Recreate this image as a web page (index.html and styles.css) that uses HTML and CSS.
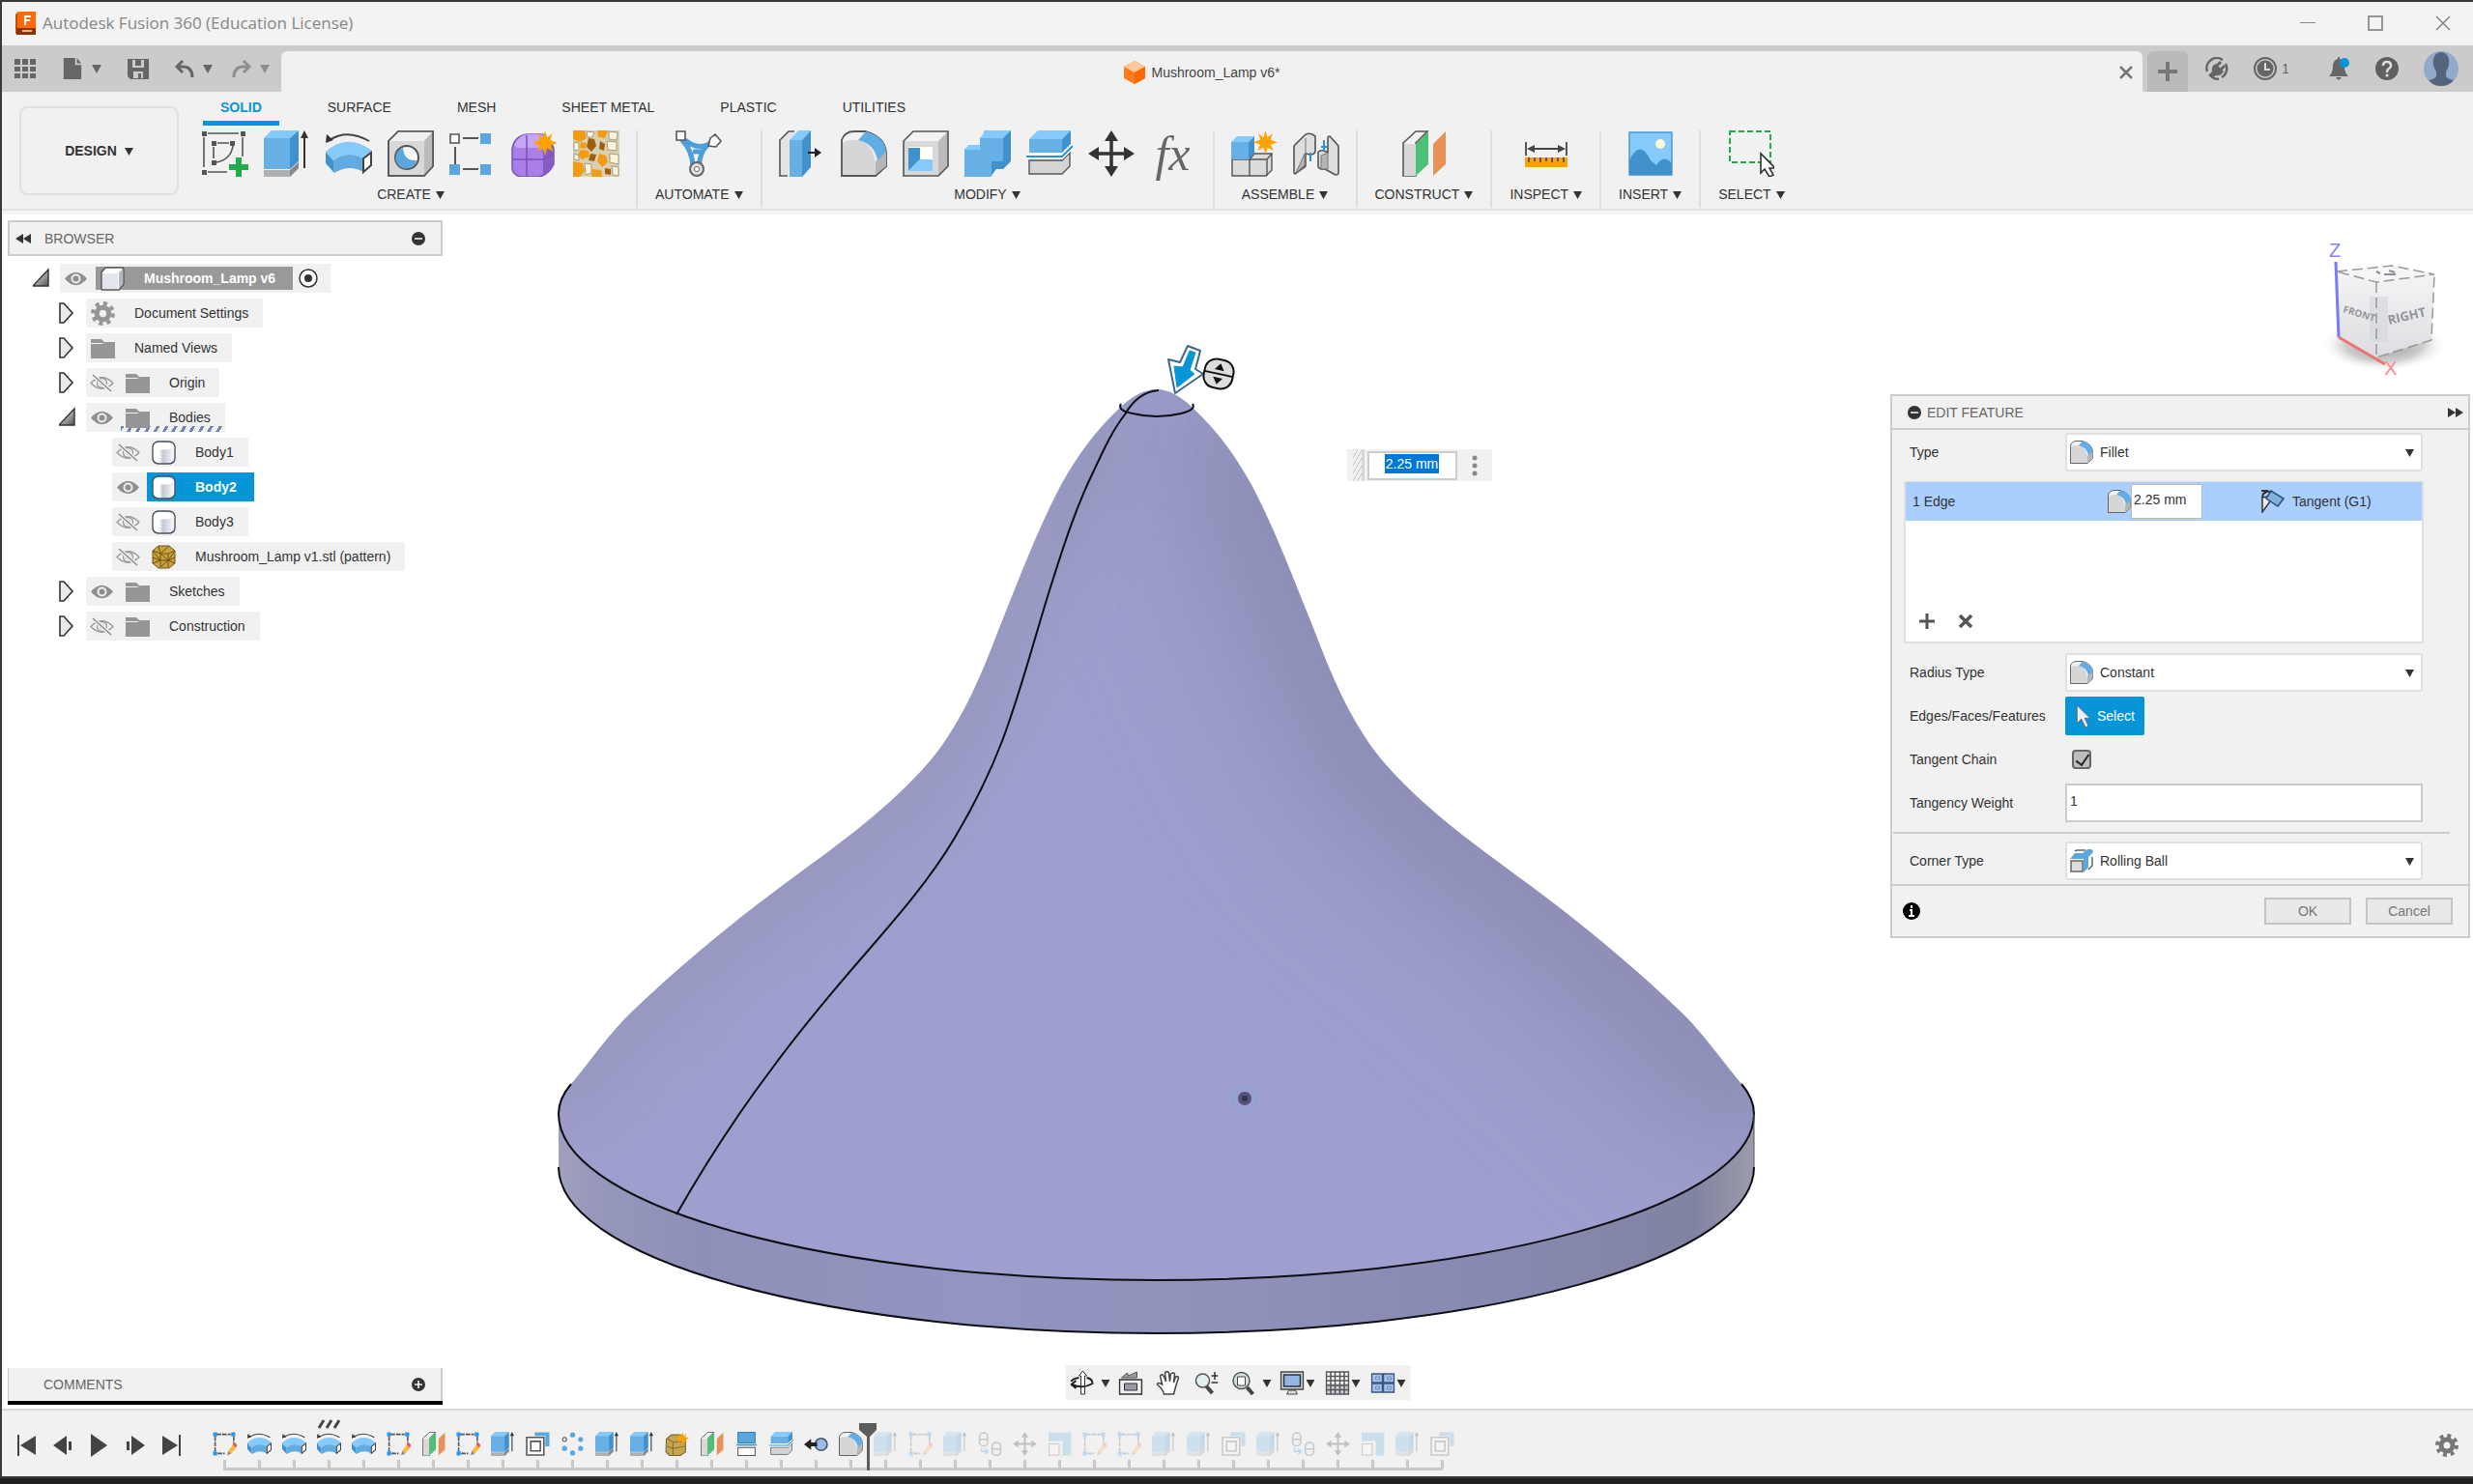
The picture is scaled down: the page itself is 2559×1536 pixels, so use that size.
FILE: index.html
```html
<!DOCTYPE html>
<html lang="en">
<head>
<meta charset="utf-8">
<title>Autodesk Fusion 360 (Education License)</title>
<link rel="stylesheet" href="styles.css">
</head>
<body>
<svg class="sprite" aria-hidden="true">
  <defs>
    <linearGradient id="toggleShade" x1="0" y1="0" x2="1" y2="1"><stop offset="0" stop-color="#fff"/><stop offset="1" stop-color="#555"/></linearGradient>
    <linearGradient id="bodyShade"><stop offset="0" stop-color="#fff"/><stop offset=".3" stop-color="#fff"/><stop offset=".45" stop-color="#c3c8d2"/><stop offset="1" stop-color="#fff"/></linearGradient>
  </defs>
  <symbol id="caret" viewBox="0 0 10 10"><path d="M0 1h10L5 10z" fill="currentColor"/></symbol>
  <symbol id="star" viewBox="0 0 24 24"><path d="M12 0l2 7 5-4-2 6 7 3-7 2 3 6-6-3-2 7-2-7-6 3 3-6-7-2 7-3-2-6 5 4z" fill="#ffa200"/></symbol>
  <symbol id="sketch" viewBox="0 0 48 48"><g fill="none" stroke="#555" stroke-width="1.6"><path d="M6 3h32M2 7v31M42 7v20M6 43h20M16 13h12M12 17v12M32 16Q30 30 15 33"/></g><path d="M0 1h5v5H0zM40 1h5v5h-5zM0 41h5v5H0zM10 11h5v5h-5zM29 11h5v5h-5zM10 31h5v5h-5z" fill="#555"/><path d="M35 28h6v7h7v6h-7v7h-6v-7h-7v-6h7z" fill="#21ab4b"/></symbol>
  <symbol id="extrude" viewBox="0 0 48 48"><path d="M0 41h27l9-8v6l-9 9H0z" fill="#b0b0b0"/><path d="M27 41l9-8v6l-9 9z" fill="#888"/><path d="M0 8h27v32H0z" fill="#67b0e6"/><path d="M0 8l8-8h28l-9 8z" fill="#86c9fb"/><path d="M27 8l9-8v32l-9 8z" fill="#4091cc"/><path d="M42 39V6" stroke="#333" stroke-width="2"/><path d="M38 8l4-8 4 8z" fill="#333"/></symbol>
  <symbol id="sweep" viewBox="0 0 48 48"><path d="M4 10Q22-2 45 11" fill="none" stroke="#444" stroke-width="2"/><path d="M0 13l1-9 7 6z" fill="#333"/><path d="M0 22v12l8 9V31z" fill="#4091cc"/><path d="M0 22Q22 2 48 21l-9 8Q22 20 8 31z" fill="#86c9fb"/><path d="M8 31Q22 20 39 29v14q-14-8-28 0l-3 1z" fill="#61abe2"/><path d="M39 29l8-6v13l-8 7z" fill="#fff" stroke="#444" stroke-width="2"/></symbol>
  <symbol id="hole" viewBox="0 0 48 48"><path d="M1 11l10-10h36v36L38 47H1z" fill="#d8d8d8" stroke="#555" stroke-width="1.6"/><path d="M1 11L11 1h36l-9 10z" fill="#f0f0f0"/><path d="M38 11l9-10v36l-9 10z" fill="#bbb"/><path d="M1 11l10-10h36v36L38 47H1z" fill="none" stroke="#555" stroke-width="1.6"/><circle cx="20" cy="28" r="12" fill="#f8f8f8" stroke="#555" stroke-width="2"/><path d="M16 18a11 11 0 1 0 14 13Q17 32 16 18z" fill="#5aa7e0"/></symbol>
  <symbol id="pattern" viewBox="0 0 48 48"><path d="M14 8h16M6 17v18M14 40h16" stroke="#555" stroke-width="2"/><path d="M1 4h9v9H1z" fill="#fff" stroke="#555" stroke-width="1.6"/><path d="M32 3h11v11H32zM0 35h11v11H0zM32 35h11v11H32z" fill="#5aa7e0"/></symbol>
  <symbol id="form" viewBox="0 0 48 48"><path d="M1 19Q3 6 16 4h16q9 5 12 15v16q-6 12-16 13H9q-8-3-8-9z" fill="#a97ee8" stroke="#7a51b4" stroke-width="1.5"/><path d="M3 15Q8 5 16 4h16l4 9-9 5H6z" fill="#c6a6f8"/><path d="M33 20l11-4v19q-4 9-11 12z" fill="#855cc4"/><path d="M16 5v42M1 30h32l11-6" fill="none" stroke="#7a51b4" stroke-width="1.5"/><use href="#star" x="22" y="0" width="26" height="26"/></symbol>
  <symbol id="lattice" viewBox="0 0 48 48"><path d="M0 0h48v48H0z" fill="#d9cfb2"/><g fill="#f39c12"><path d="M0 0h12l2 8-7 4-7-3zM25 0h11l-3 8-7-1zM0 32l10 2 2 8-5 6H0zM27 24l7 2 2 7-6 5-5-6zM8 20l8 1 1 6-8 3-4-5zM20 40l9 1 1 7H19zM8 12l6 1-1 6-6-1z"/></g><g fill="#9c5f10"><path d="M16 8l6 1 2 7-5 6-5-5zM18 24l6 1-2 7-6-1zM28 11l5 3-1 7-5-2zM33 39l6 1v6l-6-1z"/></g><g fill="#fff3da" stroke="#a59b80"><path d="M37 1l9 1-1 8-8-1zM35 11l10 1v9l-9-1zM38 24l9 1v10l-9-2zM1 12l5 1v7l-5 1zM12 34l7 1v9l-6 2zM40 37l7 1v9l-6-1zM14 1l8 1-2 5h-5zM1 24l5 2v5l-5-1z"/></g></symbol>
  <symbol id="automate" viewBox="0 0 48 48"><path d="M6 9q12 12 12 30M39 12q-14 5-15 28M10 10q14 12 28 2M18 22h10" fill="none" stroke="#4d9fda" stroke-width="5"/><path d="M1 1h9v9H1zM36 8l5-4 6 7-5 6-8-1z" fill="#fff" stroke="#555" stroke-width="1.6"/><circle cx="22" cy="40" r="7" fill="#ddd" stroke="#666" stroke-width="2"/><circle cx="22" cy="40" r="2.500" fill="#fff" stroke="#666"/></symbol>
  <symbol id="presspull" viewBox="0 0 48 48"><path d="M9 47H1V10L10 1h6" fill="#e4e4e4" stroke="#555" stroke-width="1.6"/><path d="M11 10h13v38H11z" fill="#67b0e6"/><path d="M11 10l9-10h13l-9 10z" fill="#86c9fb"/><path d="M24 10l9-10v38l-9 10z" fill="#4091cc"/><path d="M30 23h10" stroke="#222" stroke-width="2"/><path d="M37 18l7 5-7 5z" fill="#222"/></symbol>
  <symbol id="fillet" viewBox="0 0 48 48"><path d="M1 10Q4 1 14 1h12q20 6 21 22v14L36 47H1z" fill="#f1f1f1" stroke="#555" stroke-width="1.8"/><path d="M2 13q3-3 10-3h6q18 5 18 29v7H2z" fill="#d6d6d6"/><path d="M36 32l11-10v15L36 46z" fill="#b6b6b6"/><path d="M18 10L26 1q20 6 21 21l-9 9Q35 14 18 10z" fill="#62ade4"/></symbol>
  <symbol id="shell" viewBox="0 0 48 48"><path d="M1 11L11 1h36v36L37 47H1z" fill="#d8d8d8"/><path d="M1 11L11 1h36L37 11z" fill="#f3f3f3"/><path d="M37 11L47 1v36L37 47z" fill="#bbb"/><path d="M1 11L11 1h36v36L37 47H1z" fill="none" stroke="#555" stroke-width="1.6"/><path d="M6 17h25v25H6z" fill="#fff"/><path d="M6 18h12v12L6 42z" fill="#4091cc"/><path d="M6 42l12-12h13v12z" fill="#86c9fb"/></symbol>
  <symbol id="combine" viewBox="0 0 48 48"><path d="M0 20l5-5h11l5-15h27v32l-8 8h-7l-6 8H0z" fill="#4091cc"/><path d="M0 20h16V8h24v24H28v16H0z" fill="#67b0e6"/><path d="M0 20l5-5h11v5zM16 8l6-8h26l-8 8z" fill="#86c9fb"/></symbol>
  <symbol id="splitbody" viewBox="0 0 48 48"><path d="M3 31h34l8-8v14l-8 8H3z" fill="#d4d4d4" stroke="#555" stroke-width="1.4"/><path d="M3 9h34v14H3z" fill="#67b0e6"/><path d="M3 9l9-9h34l-9 9z" fill="#86c9fb"/><path d="M37 9l9-9v14l-9 9z" fill="#4091cc"/><path d="M0 27h37l11-11" fill="none" stroke="#fff" stroke-width="5"/><path d="M0 27h37l11-11" fill="none" stroke="#2590e8" stroke-width="2"/></symbol>
  <symbol id="move" viewBox="0 0 48 48"><path d="M24 6v36M6 24h36" stroke="#333" stroke-width="3.500"/><path d="M17 11l7-11 7 11zM17 37l7 11 7-11zM11 17L0 24l11 7zM37 17l11 7-11 7z" fill="#333"/></symbol>
  <symbol id="newcomp" viewBox="0 0 48 48"><path d="M1 30h18v17H1zM19 30l5-6h18v17l-6 6H19z" fill="#dcdcdc" stroke="#555" stroke-width="1.4"/><path d="M19 30h18v17M37 30l5-6" fill="none" stroke="#555" stroke-width="1.4"/><path d="M0 12h18v18H0z" fill="#67b0e6"/><path d="M0 12l6-6h18l-6 6z" fill="#86c9fb"/><path d="M18 12l6-6v18l-6 6z" fill="#4091cc"/><use href="#star" x="23" y="0" width="25" height="25"/></symbol>
  <symbol id="joint" viewBox="0 0 48 48"><g fill="#dedede" stroke="#555" stroke-width="1.6" stroke-linejoin="round"><path d="M1 16L12 5q3-3 8-1l3 2v16q-1 3-5 3l-5-1v13L2 45q-1 0-1-2z"/><path d="M47 16L38 6q-2 0-2 2v15l-4-2q-5-1-6 2v14q1 4 7 3l11 6q3 0 3-2z"/></g><path d="M13 8v17M3 44l9-8V24zM36 23v17l-7 0V26z" fill="#b5b5b5" stroke="#777"/><path d="M18 23v9M32 10v11M29 17h6" stroke="#2590e8" stroke-width="2"/></symbol>
  <symbol id="plane" viewBox="0 0 48 48"><path d="M3 13L16 1h12l-12 12v34H3z" fill="#f3f3f3" stroke="#555" stroke-width="1.6"/><path d="M4 14h12v33H4z" fill="#d8d8d8"/><path d="M16 14L29 1v34L16 47z" fill="#4dc077"/><path d="M34 14L47 1v34L34 47z" fill="#e8925a"/></symbol>
  <symbol id="measure" viewBox="0 0 48 48"><path d="M3 12v14M45 12v14M6 19h36" stroke="#444" stroke-width="1.8"/><path d="M4 19l8-4v8zM44 19l-8-4v8z" fill="#444"/><path d="M2 28h44v10H2z" fill="#ffa200"/><path d="M6 28v5M12 28v4M18 28v5M24 28v4M30 28v5M36 28v4M42 28v5" stroke="#333" stroke-width="1.4"/></symbol>
  <symbol id="picture" viewBox="0 0 48 48"><path d="M2 2h44v44H2z" fill="#86c9fb"/><circle cx="34" cy="14" r="5" fill="#fffbd0"/><path d="M2 31Q13 8 24 31l6 5q7-12 16-2v12H2z" fill="#4091cc"/><path d="M2 2h44v44H2z" fill="none" stroke="#4794cc" stroke-width="1.4"/></symbol>
  <symbol id="pick" viewBox="0 0 48 48"><path d="M2 1h42v32H2z" fill="none" stroke="#21ab4b" stroke-width="2" stroke-dasharray="6 3"/><path d="M34 24v20l4-4 5 8 4-2-4-7h6z" fill="#fff" stroke="#333" stroke-width="1.6"/></symbol>
  <symbol id="tlSketch" viewBox="0 0 48 48"><path d="M8 5h28M5 9v30M42 9v14M10 43h14" stroke="#555" stroke-width="3" stroke-dasharray="9 2"/><path d="M1 1h8v8H1zM37 1h8v8h-8zM1 39h8v8H1z" fill="#2196f3"/><path d="M31 38l9-12 7 5-10 12z" fill="#ffb640"/><path d="M40 26l3-4q5 0 5 6l-2 3z" fill="#f4475c"/><path d="M31 38l6 5-8 4z" fill="#888"/></symbol>
  <symbol id="tlShell" viewBox="0 0 48 48"><path d="M18 8V1h29v28h-8V8z" fill="#5ba6dc"/><path d="M2 11h34v35H2z" fill="#fff" stroke="#555" stroke-width="3"/><path d="M10 19h19v19H10z" fill="#fff" stroke="#555" stroke-width="3"/></symbol>
  <symbol id="tlCircular" viewBox="0 0 48 48"><g fill="#5aa7e0"><circle cx="24" cy="6" r="5"/><circle cx="40" cy="15" r="5"/><circle cx="40" cy="33" r="5"/><circle cx="24" cy="42" r="5"/><circle cx="8" cy="33" r="5"/></g><circle cx="8" cy="15" r="4" fill="#fff" stroke="#555" stroke-width="2"/></symbol>
  <symbol id="tlForm" viewBox="0 0 48 48"><path d="M3 14l10-8h18l10 8v26l-10 7H9l-7-7z" fill="#c6a552" stroke="#7a6326" stroke-width="2"/><path d="M5 14l11 6h18M5 29l11 4 24-4M16 20v26" fill="none" stroke="#8a6f2a" stroke-width="2"/><use href="#star" x="22" y="0" width="26" height="26"/></symbol>
  <symbol id="tlSplit" viewBox="0 0 48 48"><path d="M7 1h34v21H7z" fill="#5aa7e0" stroke="#3a7fb5" stroke-width="2"/><path d="M7 31h34v16H7z" fill="#fff" stroke="#555" stroke-width="2"/><path d="M4 26h40" stroke="#2196f3" stroke-width="3"/></symbol>
  <symbol id="tlJoint" viewBox="0 0 48 48"><circle cx="34" cy="25" r="12" fill="#9dbbe8" stroke="#456" stroke-width="3"/><path d="M0 25l14-11v7h12v8H14v7z" fill="#222"/></symbol>
  <symbol id="tlLink" viewBox="0 0 48 48"><g fill="#eee" stroke="#555" stroke-width="3"><rect x="3" y="2" width="16" height="26" rx="8"/><rect x="28" y="21" width="17" height="26" rx="8"/><path d="M3 15h16M28 34h17"/></g><path d="M7 31v8h10M14 34l6 5-6 5" fill="none" stroke="#2590e8" stroke-width="3"/></symbol>
  <symbol id="tlScale" viewBox="0 0 48 48"><path d="M2 1h45v46H30V18H2z" fill="#5aa7e0"/><path d="M3 24h20v22H3z" fill="#fff" stroke="#555" stroke-width="2"/></symbol>
  <symbol id="eye" viewBox="0 0 25 25"><path d="M1 12.500Q12.500-1 24 12.500 12.500 26 1 12.500z" fill="#8f8f8f"/><circle cx="12.500" cy="12.500" r="5" fill="#eee"/><circle cx="12.500" cy="12.500" r="3" fill="#8f8f8f"/></symbol>
  <symbol id="eyeOff" viewBox="0 0 25 25"><path d="M1 12.500Q12.500 1 24 12.500 12.500 24 1 12.500z" fill="none" stroke="#999" stroke-width="1.300"/><circle cx="12.500" cy="12.500" r="5" fill="none" stroke="#999" stroke-width="1.300"/><circle cx="12.500" cy="12.500" r="2" fill="none" stroke="#999"/><path d="M3 4l19 17" stroke="#f1f1f1" stroke-width="4"/><path d="M3 4l19 17" stroke="#888" stroke-width="1.300"/></symbol>
  <symbol id="folder" viewBox="0 0 25 25"><path d="M0 3h11l3 3v1H0zM0 8h12l3-2h10v17H0z" fill="#969696"/></symbol>
  <symbol id="gear" viewBox="0 0 24 24"><circle cx="12" cy="12" r="6" fill="none" stroke="currentColor" stroke-width="5"/><circle cx="12" cy="12" r="10" fill="none" stroke="currentColor" stroke-width="4" stroke-dasharray="3.927 3.927"/></symbol>
  <symbol id="body" viewBox="0 0 25 25"><path d="M1 6Q2 1 8 1h9q6 0 7 5v13q-1 5-7 5H8q-6 0-7-5z" fill="url(#bodyShade)"/><path d="M2 7Q12 12 23 7 22 2 12 2 3 2 2 7z" fill="#fff"/><path d="M1 6Q2 1 8 1h9q6 0 7 5v13q-1 5-7 5H8q-6 0-7-5z" fill="none" stroke="#4a5160" stroke-width="1.400"/></symbol>
  <symbol id="component" viewBox="0 0 25 25"><path d="M1 6l4-5h18l1 2v15l-5 6H2l-1-1z" fill="#fff" stroke="#555" stroke-width="1.400"/><path d="M2 7h16v16H2z" fill="#e3e6ec"/><path d="M19 6l4-4v16l-4 5z" fill="#b5b9c2"/></symbol>
  <symbol id="mesh" viewBox="0 0 25 25"><path d="M1 6l6-5h11l6 5v13l-6 5H7l-6-5z" fill="#c9a23c" stroke="#6c5214"/><path d="M1 6l8 3h8l7-3M9 9v14M17 9v14M1 13l8 3h8l7-3M7 1l2 8 9-8M1 6l8 10-8 3M9 9l8 7-8 7M24 6l-7 10 7 3" fill="none" stroke="#6c5214"/></symbol>
  <symbol id="closed" viewBox="0 0 18 22"><path d="M1 1h4l9 10-9 10H1z" fill="#e8eaee" stroke="#333" stroke-width="1.600"/></symbol>
  <symbol id="open" viewBox="0 0 18 22"><path d="M16 2v17H0z" fill="url(#toggleShade)" stroke="#333" stroke-width="1.400"/></symbol>
  <symbol id="minus" viewBox="0 0 14 14"><circle cx="7" cy="7" r="7" fill="#333"/><path d="M3 7h8" stroke="#f1f1f1" stroke-width="1.600"/></symbol>
  <symbol id="plus" viewBox="0 0 14 14"><circle cx="7" cy="7" r="7" fill="#333"/><path d="M3 7h8M7 3v8" stroke="#f1f1f1" stroke-width="1.600"/></symbol>
  <symbol id="rewind" viewBox="0 0 16 12"><path d="M8 1v10L0 6zM16 1v10L8 6z" fill="#333"/></symbol>
  <symbol id="forward" viewBox="0 0 16 12"><path d="M0 1v10l8-5zM8 1v10l8-5z" fill="#333"/></symbol>
  <symbol id="arrowptr" viewBox="0 0 16 28"><path d="M1 1v21l5-5 5 10 3-2-4-9h6z" fill="#eee" stroke="#666"/></symbol>
</svg>

<div class="app">
  <header class="titlebar">
    <svg class="i24" viewBox="0 0 24 24" aria-hidden="true"><path d="M2 2l2-2h18v24H2z" fill="#ff6b00"/><path d="M1 3l2-2v21l-2 1z" fill="#c24e00"/><path d="M2 17h20v7H2z" fill="#8a3500"/><path d="M10 4h7v2h-5v2h4v2h-4v4h-2z" fill="#fff"/><path d="M8 20h10" stroke="#e5b79a" stroke-width="2"/></svg>
    <span class="app-name">Autodesk Fusion 360 (Education License)</span>
    <div class="window-controls">
      <button aria-label="Minimize"><svg class="i16" viewBox="0 0 16 16"><path d="M0 7.500h16" stroke="#888"/></svg></button>
      <button aria-label="Maximize"><svg class="i16" viewBox="0 0 16 16"><rect x="1" y="1" width="14" height="14" fill="none" stroke="#777" stroke-width="1.500"/></svg></button>
      <button aria-label="Close"><svg class="i16" viewBox="0 0 16 16"><path d="M1 1l14 14M15 1L1 15" stroke="#777" stroke-width="1.300"/></svg></button>
    </div>
  </header>

  <div class="strip">
    <div class="quick">
      <button aria-label="Data panel"><svg class="i22" viewBox="0 0 22 22"><path d="M0 1h6v6H0zM8 1h6v6H8zM16 1h6v6h-6zM0 9h6v5H0zM8 9h6v5H8zM16 9h6v5h-6zM0 16h6v5H0zM8 16h6v5H8zM16 16h6v5h-6z" fill="#666"/></svg></button>
      <button class="drop" aria-label="File"><svg class="i22" viewBox="0 0 22 24"><path d="M1 0h13v8h7v16H1zM16 0l5 6h-5z" fill="#666"/></svg><svg class="c10"><use href="#caret"/></svg></button>
      <button aria-label="Save"><svg class="i22" viewBox="0 0 22 22"><path d="M0 1h22v21H3l-3-3z" fill="#666"/><path d="M5 2h12v8H5zM6 14h10v7H6z" fill="#cbcbcb"/><path d="M8 1h6v7H8zM11 16h3v6h-3z" fill="#666"/></svg></button>
      <div class="history">
        <button class="drop" aria-label="Undo"><svg class="i20" viewBox="0 0 20 20"><path d="M8 2L2 8l6 6M2 8h6q10 0 10 11" fill="none" stroke="#666" stroke-width="3"/></svg><svg class="c10"><use href="#caret"/></svg></button>
        <button class="drop faded" aria-label="Redo"><svg class="i20" viewBox="0 0 20 20"><path d="M12 2l6 6-6 6M18 8h-6Q2 8 2 19" fill="none" stroke="#666" stroke-width="3"/></svg><svg class="c10"><use href="#caret"/></svg></button>
      </div>
    </div>
    <div class="doc-tab">
      <svg class="i24" viewBox="0 0 24 24" aria-hidden="true"><path d="M1 6l11-6 11 6v12l-11 6-11-6z" fill="#ff7a1a"/><path d="M1 6l11-6 11 6-11 6z" fill="#ffc79e"/><path d="M12 12l11-6v12l-11 6z" fill="#ff6a00"/></svg>
      <span>Mushroom_Lamp v6*</span>
      <button class="doc-close" aria-label="Close document"><svg class="i14" viewBox="0 0 14 14"><path d="M1 1l12 12M13 1L1 13" stroke="#777" stroke-width="2.500"/></svg></button>
    </div>
    <button class="new-tab" aria-label="New design"><svg class="i20" viewBox="0 0 20 20"><path d="M10 0v20M0 10h20" stroke="#777" stroke-width="4"/></svg></button>
    <div class="account">
      <div class="account-part">
        <button aria-label="Extensions"><svg class="i24" viewBox="0 0 24 24"><path d="M2 15A10.500 10.500 0 0 1 18 3M21 7A10.500 10.500 0 0 1 17 21M14 22.500q-5 1-8-3" fill="none" stroke="#666" stroke-width="2.500"/><path d="M3 19l4-4q-1-6 4-8l8 8q-3 5-8 4l-4 3z" fill="#666"/><path d="M12 9l4-4M16 13l4-4" stroke="#666" stroke-width="3"/></svg></button>
        <button class="jobs" aria-label="Job status"><svg class="i24" viewBox="0 0 24 24"><circle cx="12" cy="12" r="11" fill="none" stroke="#666" stroke-width="2"/><circle cx="12" cy="12" r="8.500" fill="#666"/><path d="M12 6v7h5" fill="none" stroke="#ddd" stroke-width="2"/></svg><span>1</span></button>
      </div>
      <div class="account-part">
        <button aria-label="Notifications"><svg class="i24" viewBox="0 0 24 24"><path d="M2 20q4-4 4-10 0-7 5-8V0h2v2q5 1 5 8 0 6 4 10zM9 21h6q-3 5-6 0z" fill="#666"/><circle cx="18" cy="6" r="5" fill="#0696d7"/></svg></button>
        <button aria-label="Help"><svg class="i24" viewBox="0 0 24 24"><circle cx="12" cy="12" r="12" fill="#606060"/><path d="M8 9q0-4 4-4t4 4q0 2-2 3t-2 4" fill="none" stroke="#ddd" stroke-width="2.500"/><circle cx="12" cy="19" r="1.600" fill="#ddd"/></svg></button>
        <button aria-label="Profile"><svg class="i36" viewBox="0 0 36 36"><circle cx="18" cy="18" r="18" fill="#92a9c9"/><path d="M10 8q2-7 8-7t8 7q1 8-3 13v5q2 3 8 4-5 6-13 6T5 30q6-1 8-4v-5Q9 16 10 8z" fill="#53657c"/></svg></button>
      </div>
    </div>
  </div>

  <div class="ribbon">
    <button class="workspace">DESIGN <svg class="c9"><use href="#caret"/></svg></button>
    <div class="ribbon-main">
      <nav class="tabs">
        <button class="active">SOLID</button><button>SURFACE</button><button>MESH</button><button>SHEET METAL</button><button>PLASTIC</button><button>UTILITIES</button>
      </nav>
      <div class="groups">
        <section class="group"><div class="tools">
          <button aria-label="Create sketch"><svg class="i48"><use href="#sketch"/></svg></button><button aria-label="Extrude"><svg class="i48"><use href="#extrude"/></svg></button><button aria-label="Revolve"><svg class="i48"><use href="#sweep"/></svg></button><button aria-label="Hole"><svg class="i48"><use href="#hole"/></svg></button><button aria-label="Pattern"><svg class="i48"><use href="#pattern"/></svg></button><button aria-label="Create form"><svg class="i48"><use href="#form"/></svg></button><button aria-label="Volumetric lattice"><svg class="i48"><use href="#lattice"/></svg></button></div>
          <button class="menu">CREATE <svg class="c9"><use href="#caret"/></svg></button></section>
        <section class="group small"><div class="tools"><button aria-label="Automate"><svg class="i48"><use href="#automate"/></svg></button></div><button class="menu">AUTOMATE <svg class="c9"><use href="#caret"/></svg></button></section>
        <section class="group"><div class="tools">
          <button aria-label="Press pull"><svg class="i48"><use href="#presspull"/></svg></button><button aria-label="Fillet"><svg class="i48"><use href="#fillet"/></svg></button><button aria-label="Shell"><svg class="i48"><use href="#shell"/></svg></button><button aria-label="Combine"><svg class="i48"><use href="#combine"/></svg></button><button aria-label="Split body"><svg class="i48"><use href="#splitbody"/></svg></button><button aria-label="Move"><svg class="i48"><use href="#move"/></svg></button><button class="fx">fx</button></div>
          <button class="menu">MODIFY <svg class="c9"><use href="#caret"/></svg></button></section>
        <section class="group"><div class="tools"><button aria-label="New component"><svg class="i48"><use href="#newcomp"/></svg></button><button aria-label="Joint"><svg class="i48"><use href="#joint"/></svg></button></div><button class="menu">ASSEMBLE <svg class="c9"><use href="#caret"/></svg></button></section>
        <section class="group small"><div class="tools"><button aria-label="Offset plane"><svg class="i48"><use href="#plane"/></svg></button></div><button class="menu">CONSTRUCT <svg class="c9"><use href="#caret"/></svg></button></section>
        <section class="group small"><div class="tools"><button aria-label="Measure"><svg class="i48"><use href="#measure"/></svg></button></div><button class="menu">INSPECT <svg class="c9"><use href="#caret"/></svg></button></section>
        <section class="group small"><div class="tools"><button aria-label="Insert canvas"><svg class="i48"><use href="#picture"/></svg></button></div><button class="menu">INSERT <svg class="c9"><use href="#caret"/></svg></button></section>
        <section class="group small"><div class="tools"><button aria-label="Window selection"><svg class="i48"><use href="#pick"/></svg></button></div><button class="menu">SELECT <svg class="c9"><use href="#caret"/></svg></button></section>
      </div>
    </div>
  </div>

  <main class="viewport">
    <svg class="scene" viewBox="2 222 2557 1236" role="img" aria-label="Lamp body model">
      <defs>
        <path id="dome" d="M1197 403C1183 403 1170 411 1159 422C1135 444 1115 471 1099 500C1075 545 1057 593 1038 640C1030 660 1022 682 1013 702C1000 732 983 763 962 788C918 839 863 877 809 917C755 957 702 1001 654 1047C630 1070 612 1097 591 1122Q578 1137 578 1153A618.500 172 0 0 0 1815 1153Q1815 1137 1802 1122C1781 1097 1763 1070 1739 1047C1691 1001 1638 957 1584 917C1530 877 1475 839 1431 788C1410 763 1393 732 1380 702C1371 682 1363 660 1355 640C1336 593 1318 545 1294 500C1278 471 1258 444 1234 422C1223 411 1210 403 1197 403Z"/>
        <clipPath id="domeClip"><use href="#dome"/></clipPath>
        <filter id="soft" x="-20%" y="-20%" width="140%" height="140%"><feGaussianBlur stdDeviation="34"/></filter>
        <filter id="softer" x="-30%" y="-20%" width="160%" height="140%"><feGaussianBlur stdDeviation="70"/></filter>
        <linearGradient id="rim"><stop offset="0" stop-color="#a0a1bc"/><stop offset=".03" stop-color="#9697bb"/><stop offset=".12" stop-color="#8e90b8"/><stop offset=".35" stop-color="#9295c0"/><stop offset=".55" stop-color="#9092bb"/><stop offset=".8" stop-color="#8788b0"/><stop offset=".95" stop-color="#8183a2"/><stop offset="1" stop-color="#9a9bab"/></linearGradient>
      </defs>
      <path d="M578 1153V1208A618.500 172 0 0 0 1815 1208V1153A618.500 172 0 0 1 578 1153Z" fill="url(#rim)"/>
      <use href="#dome" fill="#9e9fce"/>
      <g clip-path="url(#domeClip)" fill="none">
        <path d="M1265 440C1340 560 1370 700 1430 790C1560 900 1720 1020 1850 1160" stroke="#8486a8" stroke-width="190" opacity=".5" filter="url(#softer)"/>
        <path d="M1234 422C1278 471 1336 593 1355 640C1371 682 1400 751 1431 788C1475 839 1530 877 1584 917C1638 957 1720 1028 1830 1153" stroke="#7e80a0" stroke-width="50" opacity=".32" filter="url(#soft)"/>
        <path d="M1159 422C1115 471 1057 593 1038 640C1022 682 983 763 962 788C918 839 863 877 809 917C755 957 630 1060 560 1153" stroke="#8b8da8" stroke-width="60" opacity=".5" filter="url(#soft)"/>
      </g>
      <g fill="none" stroke="#0d0d14" stroke-width="2">
        <path d="M591 1122Q578 1137 578 1153A618.500 172 0 0 0 1815 1153Q1815 1137 1802 1122M578 1208A618.500 172 0 0 0 1815 1208"/>
        <path d="M1815 1153V1208" stroke="#555" stroke-width="1"/>
        <path d="M1199 404C1184 405 1172 415 1164 429C1150 447 1141 468 1131 489C1112 528 1099 570 1086 611C1070 662 1056 717 1037 767C1024 801 1007 835 988 867C963 909 931 946 899 983C865 1022 832 1061 801 1103C764 1152 730 1204 700 1257"/>
        <path d="M1160 418Q1156 425 1172 428Q1197 434 1222 428Q1238 424 1234 418"/>
      </g>
      <circle cx="1288" cy="1137" r="12" fill="none" stroke="#83a6d6" stroke-width="1.500"/>
      <circle cx="1288" cy="1137" r="7" fill="#52527a"/><circle cx="1288" cy="1137" r="3" fill="#343450"/>
      <path d="M1229 358l13 5-5 19 8 5-29 20-7-35 12 3z" fill="#fff" stroke="#41688c" stroke-width="2" stroke-linejoin="round"/>
      <path d="M1231 363l6 2-6 18 5 4-18 14-3-22 9 1z" fill="#0696d7" stroke="#0696d7"/>
      <g transform="translate(1261 387) rotate(12)"><rect x="-15" y="-15" width="30" height="30" rx="12" fill="#ddd" stroke="#111" stroke-width="2"/><path d="M-15 0h30" stroke="#111" stroke-width="2"/><path d="M-5-4h10l-5-7zM-5 4h10l-5 7z" fill="#111"/></g>
    </svg>

    <div class="left-dock">
      <aside class="browser">
        <div class="panel-head"><svg class="i16"><use href="#rewind"/></svg><h2>BROWSER</h2><button aria-label="Collapse browser"><svg class="i14"><use href="#minus"/></svg></button></div>
        <ul class="tree">
          <li class="l0"><button class="toggle" aria-label="Collapse"><svg><use href="#open"/></svg></button><div class="label"><svg class="i25 vis"><use href="#eye"/></svg><span class="node current"><svg class="i25"><use href="#component"/></svg>Mushroom_Lamp v6</span><svg class="i25 radio" viewBox="0 0 25 25"><circle cx="12" cy="12" r="9" fill="#fff" stroke="#333" stroke-width="1.500"/><circle cx="12" cy="12" r="4" fill="#333"/></svg></div></li>
          <li class="l1"><button class="toggle" aria-label="Expand"><svg><use href="#closed"/></svg></button><div class="label"><span class="node"><svg class="i25 grey"><use href="#gear"/></svg>Document Settings</span></div></li>
          <li class="l1"><button class="toggle" aria-label="Expand"><svg><use href="#closed"/></svg></button><div class="label"><span class="node"><svg class="i25"><use href="#folder"/></svg>Named Views</span></div></li>
          <li class="l1"><button class="toggle" aria-label="Expand"><svg><use href="#closed"/></svg></button><div class="label"><svg class="i25 vis"><use href="#eyeOff"/></svg><span class="node"><svg class="i25"><use href="#folder"/></svg>Origin</span></div></li>
          <li class="l1"><button class="toggle" aria-label="Collapse"><svg><use href="#open"/></svg></button><div class="label"><svg class="i25 vis"><use href="#eye"/></svg><span class="node parent"><svg class="i25"><use href="#folder"/></svg>Bodies</span></div></li>
          <li class="l2"><div class="label"><svg class="i25 vis"><use href="#eyeOff"/></svg><span class="node"><svg class="i25"><use href="#body"/></svg>Body1</span></div></li>
          <li class="l2"><div class="label"><svg class="i25 vis"><use href="#eye"/></svg><span class="node selected"><svg class="i25"><use href="#body"/></svg>Body2</span></div></li>
          <li class="l2"><div class="label"><svg class="i25 vis"><use href="#eyeOff"/></svg><span class="node"><svg class="i25"><use href="#body"/></svg>Body3</span></div></li>
          <li class="l2"><div class="label"><svg class="i25 vis"><use href="#eyeOff"/></svg><span class="node"><svg class="i25"><use href="#mesh"/></svg>Mushroom_Lamp v1.stl (pattern)</span></div></li>
          <li class="l1"><button class="toggle" aria-label="Expand"><svg><use href="#closed"/></svg></button><div class="label"><svg class="i25 vis"><use href="#eye"/></svg><span class="node"><svg class="i25"><use href="#folder"/></svg>Sketches</span></div></li>
          <li class="l1"><button class="toggle" aria-label="Expand"><svg><use href="#closed"/></svg></button><div class="label"><svg class="i25 vis"><use href="#eyeOff"/></svg><span class="node"><svg class="i25"><use href="#folder"/></svg>Construction</span></div></li>
        </ul>
      </aside>
      <div class="comments"><h2>COMMENTS</h2><button aria-label="Expand comments"><svg class="i14"><use href="#plus"/></svg></button></div>
    </div>

    <div class="right-dock">
      <svg class="cube" viewBox="2390 234 160 164" role="img" aria-label="View cube">
        <defs><radialGradient id="cubeShadow"><stop offset="0" stop-color="#777" stop-opacity=".8"/><stop offset=".6" stop-color="#999" stop-opacity=".5"/><stop offset="1" stop-color="#fff" stop-opacity="0"/></radialGradient><linearGradient id="cubeFace" x1="0" y1="0" x2="0" y2="1"><stop offset="0" stop-color="#f4f4f5"/><stop offset="1" stop-color="#dcdde0"/></linearGradient></defs>
        <ellipse cx="2467" cy="357" rx="66" ry="28" fill="url(#cubeShadow)"/>
        <path d="M2418 281l57-6 44 9-60 8z" fill="#f6f6f7"/><path d="M2418 281l41 11v78l-39-21z" fill="url(#cubeFace)"/><path d="M2459 292l60-8-3 68-57 18z" fill="url(#cubeFace)"/>
        <path d="M2452 307h19v48l-19-2z" fill="#d5d9df" opacity=".7"/>
        <path d="M2418 281l57-6 44 9-60 8zM2459 292v78l57-18 3-68" fill="none" stroke="#999" stroke-width="1.500" stroke-dasharray="11 5"/>
        <path d="M2459 281l4 2M2467 284h12M2472 280l6 2" stroke="#8a8d93" stroke-width="2"/>
        <path d="M2417 271l3 78" stroke="#7b7bf5" stroke-width="3"/><path d="M2420 349l48 28" stroke="#ee7373" stroke-width="3"/>
        <text x="2416" y="266" class="axis z">Z</text><text x="2474" y="388" class="axis x">X</text>
        <text class="face front" transform="translate(2424 323) rotate(17)">FRONT</text><text class="face" transform="translate(2472 336) rotate(-13)">RIGHT</text>
      </svg>
      <form class="feature">
        <div class="feature-head"><svg class="i14"><use href="#minus"/></svg><h2>EDIT FEATURE</h2><svg class="i16"><use href="#forward"/></svg></div>
        <div class="feature-body">
          <div class="row"><label for="type">Type</label><div class="combo"><svg class="i24"><use href="#fillet"/></svg><select id="type"><option>Fillet</option></select><svg class="c9"><use href="#caret"/></svg></div></div>
          <div class="edges">
            <div class="edge"><span class="edge-name">1 Edge</span><svg class="i24"><use href="#fillet"/></svg><input aria-label="Radius" value="2.25 mm"><svg class="i24 tangent" viewBox="0 0 24 24"><path d="M1 8v15l8-11-3-5z" fill="#eee" stroke="#333" stroke-width="1.500"/><path d="M0 1h6l4 2M1 8q0-5 5-6" fill="none" stroke="#333" stroke-width="2"/><path d="M10 1l13 8-6 8L5 9z" fill="#82b0dc" stroke="#29527c" stroke-width="1.500"/></svg><span>Tangent (G1)</span></div>
            <div class="edge-tools"><button type="button" aria-label="Add selection set"><svg class="i16" viewBox="0 0 16 16"><path d="M8 0v16M0 8h16" stroke="#555" stroke-width="3"/></svg></button><button type="button" aria-label="Remove selection set"><svg class="i14" viewBox="0 0 14 14"><path d="M1 1l12 12M13 1L1 13" stroke="#555" stroke-width="3.500"/></svg></button></div>
          </div>
          <div class="row"><label for="radius-type">Radius Type</label><div class="combo"><svg class="i24"><use href="#fillet"/></svg><select id="radius-type"><option>Constant</option></select><svg class="c9"><use href="#caret"/></svg></div></div>
          <div class="row"><label for="pick-edges">Edges/Faces/Features</label><button type="button" class="select-btn" id="pick-edges"><svg><use href="#arrowptr"/></svg>Select</button></div>
          <div class="row"><label for="chain">Tangent Chain</label><input type="checkbox" id="chain" checked></div>
          <div class="row"><label for="weight">Tangency Weight</label><input class="text" id="weight" value="1"></div>
          <hr>
          <div class="row"><label for="corner">Corner Type</label><div class="combo"><svg class="i24" viewBox="0 0 24 24"><path d="M1 12h12v11H1z" fill="#ddd" stroke="#666" stroke-width="1.500"/><path d="M5 2l2-1h9M23 8v9l-4 4" fill="none" stroke="#666" stroke-width="1.500"/><path d="M0 10l5-6h8l5-4q6-1 6 3l-5 5v11l-5 5V10z" fill="#5aa7e0"/></svg><select id="corner"><option>Rolling Ball</option></select><svg class="c9"><use href="#caret"/></svg></div></div>
        </div>
        <div class="feature-foot"><svg class="i18" viewBox="0 0 18 18" aria-hidden="true"><circle cx="9" cy="9" r="9"/><path d="M9 3v3M7 8h2v6M6 14h6" stroke="#fff" stroke-width="2" fill="none"/></svg><button type="button">OK</button><button type="button">Cancel</button></div>
      </form>
    </div>

    <div class="value-box"><i class="grip"></i><input aria-label="Fillet radius" value="2.25 mm"><button aria-label="More"><svg viewBox="0 0 6 22"><g fill="#888"><circle cx="3" cy="3" r="2.500"/><circle cx="3" cy="11" r="2.500"/><circle cx="3" cy="19" r="2.500"/></g></svg></button></div>

    <div class="navbar">
      <button class="drop" aria-label="Orbit"><svg class="i25" viewBox="0 0 25 25"><path d="M11 24V5H9l4-5 4 5h-2v19z" fill="#fff" stroke="#333"/><path d="M6 18l-5-4 5-4M2 14q11 5 21-1 0-5-6-6M9 7Q2 8 1 11" fill="none" stroke="#222" stroke-width="2"/></svg><svg class="c9"><use href="#caret"/></svg></button>
      <button aria-label="Look at"><svg class="i25" viewBox="0 0 25 25"><path d="M1 9h23v15H1z" fill="#eee" stroke="#333" stroke-width="1.500"/><path d="M6 13h13v7H6z" fill="#99a" stroke="#333"/><path d="M3 7l6-5 1 3 9-4v6z" fill="#99a" stroke="#555"/></svg></button>
      <button aria-label="Pan"><svg class="i25" viewBox="0 0 25 25"><path d="M8 24q-1-5-7-10 0-3 5 0L4 5q2-3 4 1l2 5-1-9q2-3 4 0l1 9 1-8q3-2 4 0l-1 9 2-6q3-1 3 1-3 9-5 17z" fill="#fff" stroke="#444" stroke-width="1.500"/></svg></button>
      <button aria-label="Zoom"><svg class="i25" viewBox="0 0 25 25"><circle cx="9" cy="10" r="7" fill="#e2eeee" stroke="#555" stroke-width="1.500"/><path d="M13 16l6 7" stroke="#444" stroke-width="4"/><path d="M18 5h7M21.500 1v8M18 12h7" stroke="#333" stroke-width="1.500"/></svg></button>
      <button class="drop" aria-label="Fit"><svg class="i25" viewBox="0 0 25 25"><circle cx="10" cy="10" r="8.500" fill="#cfe0dd" stroke="#555" stroke-width="1.500"/><path d="M6 6h8v9H6z" fill="#fff" stroke="#444"/><path d="M16 17l6 7" stroke="#444" stroke-width="4"/></svg><svg class="c9"><use href="#caret"/></svg></button>
      <button class="drop tight" aria-label="Display settings"><svg class="i25" viewBox="0 0 25 25"><path d="M1 1h23v18H1z" fill="#ddd" stroke="#444" stroke-width="1.500"/><path d="M4 4h17v12H4z" fill="#93b5e4" stroke="#234" stroke-width="1.500"/><path d="M9 20h7l2 4H7z" fill="#ddd" stroke="#444"/></svg><svg class="c9"><use href="#caret"/></svg></button>
      <button class="drop tight" aria-label="Grid and snaps"><svg class="i25" viewBox="0 0 25 25"><path d="M1 1h23v23H1z" fill="#fff"/><path d="M1 13h23v11H1z" fill="#ccd"/><path d="M1 1h23v23H1zM5.500 1v23M10 1v23M15 1v23M19.500 1v23M1 5.500h23M1 10h23M1 15h23M1 19.500h23" fill="none" stroke="#555" stroke-width="1.500"/></svg><svg class="c9"><use href="#caret"/></svg></button>
      <button class="drop tight" aria-label="Viewports"><svg class="i25" viewBox="0 0 25 25"><path d="M1 3h11v9H1zM13 3h11v9H13zM1 13h11v9H1zM13 13h11v9H13z" fill="#a9c4ea" stroke="#3c5580" stroke-width="1.500"/><path d="M5 6h4v3H5zM17 6h4v3h-4zM5 16h4v3H5zM17 16h4v3h-4z" fill="none" stroke="#6d8cbd"/></svg><svg class="c9"><use href="#caret"/></svg></button>
    </div>
  </main>

  <footer class="timeline">
    <div class="playback">
      <button aria-label="To beginning"><svg class="i24" viewBox="0 0 24 24"><path d="M3 1h2v22H3zM22 2v20L6 12z" fill="#444"/></svg></button>
      <button aria-label="Step back"><svg class="i24" viewBox="0 0 24 24"><path d="M16 2v20L2 12zM18 8h3v9h-3z" fill="#444"/></svg></button>
      <button aria-label="Play"><svg class="i24" viewBox="0 0 24 24"><path d="M3 0v24l17-12z" fill="#444"/></svg></button>
      <button aria-label="Step forward"><svg class="i24" viewBox="0 0 24 24"><path d="M7 2v20l14-10zM2 8h3v9H2z" fill="#444"/></svg></button>
      <button aria-label="To end"><svg class="i24" viewBox="0 0 24 24"><path d="M18 1h2v22h-2zM1 2v20l16-10z" fill="#444"/></svg></button>
    </div>
    <ol class="features">
      <li><svg><use href="#tlSketch"/></svg></li><li><svg><use href="#sweep"/></svg></li><li><svg><use href="#sweep"/></svg></li>
      <li><svg class="slashes" viewBox="0 0 24 10"><path d="M2 9l5-8M10 9l5-8M18 9l5-8" stroke="#444" stroke-width="3"/></svg><svg><use href="#sweep"/></svg></li>
      <li><svg><use href="#sweep"/></svg></li><li><svg><use href="#tlSketch"/></svg></li><li><svg><use href="#plane"/></svg></li><li><svg><use href="#tlSketch"/></svg></li><li><svg><use href="#extrude"/></svg></li><li><svg><use href="#tlShell"/></svg></li><li><svg><use href="#tlCircular"/></svg></li><li><svg><use href="#extrude"/></svg></li><li><svg><use href="#extrude"/></svg></li><li><svg><use href="#tlForm"/></svg></li><li><svg><use href="#plane"/></svg></li><li><svg><use href="#tlSplit"/></svg></li><li><svg><use href="#splitbody"/></svg></li><li><svg><use href="#tlJoint"/></svg></li>
      <li><svg><use href="#fillet"/></svg><svg class="marker" viewBox="0 0 18 49"><path d="M0 0h18v7l-7 7v35H8V14L0 7z" fill="#5c5c5c"/></svg></li>
      <li class="off"><svg><use href="#extrude"/></svg></li><li class="off"><svg><use href="#tlSketch"/></svg></li><li class="off"><svg><use href="#extrude"/></svg></li><li class="off"><svg><use href="#tlLink"/></svg></li><li class="off"><svg><use href="#move"/></svg></li><li class="off"><svg><use href="#tlScale"/></svg></li><li class="off"><svg><use href="#tlSketch"/></svg></li><li class="off"><svg><use href="#tlSketch"/></svg></li><li class="off"><svg><use href="#extrude"/></svg></li><li class="off"><svg><use href="#extrude"/></svg></li><li class="off"><svg><use href="#tlShell"/></svg></li><li class="off"><svg><use href="#extrude"/></svg></li><li class="off"><svg><use href="#tlLink"/></svg></li><li class="off"><svg><use href="#move"/></svg></li><li class="off"><svg><use href="#tlScale"/></svg></li><li class="off"><svg><use href="#extrude"/></svg></li><li class="off"><svg><use href="#tlShell"/></svg></li>
    </ol>
    <button class="settings" aria-label="Timeline settings"><svg class="i24"><use href="#gear"/></svg></button>
  </footer>
</div>
</body>
</html>
```
FILE: styles.css
```css
* { box-sizing: border-box; }
body {
  margin: 0;
  background: #222;
  color: #333;
  font: 14px/20px "Liberation Sans", Arial, sans-serif;
}
button {
  display: flex;
  align-items: center;
  justify-content: center;
  margin: 0;
  padding: 0;
  border: 0;
  background: none;
  color: inherit;
  font: inherit;
}
input, select { margin: 0; color: inherit; font: inherit; }
svg { display: block; flex: none; }
h2 { margin: 0; font-size: 14px; font-weight: 400; color: #666; }
ul, ol { margin: 0; padding: 0; list-style: none; }

.sprite { position: absolute; width: 0; height: 0; }
.c9 { width: 9px; height: 9px; }
.c10 { width: 10px; height: 10px; }
.i14 { width: 14px; height: 14px; }
.i16 { width: 16px; height: 16px; }
.i18 { width: 18px; height: 18px; }
.i20 { width: 20px; height: 20px; }
.i22 { width: 22px; height: 22px; }
.i24 { width: 24px; height: 24px; }
.i25 { width: 25px; height: 25px; }
.i36 { width: 36px; height: 36px; }
.i48 { width: 48px; height: 48px; }

.app {
  display: flex;
  flex-direction: column;
  min-height: calc(100vh - 6px);
  border: solid #3a3838;
  border-width: 2px 0 2px 2px;
}

/* title bar */
.titlebar {
  display: flex;
  align-items: center;
  gap: 5px;
  height: 45px;
  padding: 0 23px 2px 13px;
  background: #f3f3f3;
}
.app-name { font: 17px/24px "Open Sans", sans-serif; color: #868686; }
.window-controls { display: flex; gap: 54px; margin-left: auto; }

/* document strip */
.strip { display: flex; height: 48px; background: #cbcbcb; color: #666; }
.quick { display: flex; align-items: center; gap: 27px; width: 289px; padding-left: 13px; }
.history { display: flex; gap: 20px; }
.drop { gap: 9px; }
.faded { opacity: .6; }
.doc-tab {
  display: flex;
  flex: 1;
  align-items: center;
  justify-content: center;
  gap: 5px;
  margin-top: 6px;
  padding: 2px 10px 0 8px;
  border-radius: 6px 6px 0 0;
  background: #f1f1f1;
  color: #444;
}
.doc-tab > svg { margin-left: auto; }
.doc-close { margin-left: auto; }
.new-tab { width: 42px; margin: 6px 0 0 5px; border-radius: 6px 6px 0 0; background: #bababa; }
.account { display: flex; justify-content: space-between; width: 295px; padding: 0 15px 0 18px; }
.account-part { display: flex; align-items: center; gap: 26px; }
.jobs { gap: 5px; }

/* ribbon */
.ribbon {
  display: flex;
  height: 127px;
  padding: 0 0 6px 18px;
  background: linear-gradient(#f1f1f1 121px, #e2e2e2 121px, #e2e2e2 123px, #f5f5f5 123px);
}
.workspace {
  gap: 8px;
  width: 165px;
  height: 92px;
  margin-top: 15px;
  border: 2px solid #e0e0e0;
  border-radius: 8px;
  font-weight: 700;
}
.tabs { display: flex; gap: 32px; height: 35px; margin-left: 25px; }
.tabs button { padding: 2px 18px 0; border-bottom: 5px solid transparent; }
.tabs .active { border-color: #0696d7; color: #0696d7; font-weight: 700; }
.groups { display: flex; margin: 5px 0 0 7px; }
.group { display: flex; flex-direction: column; align-items: center; padding: 0 17px; border-right: 2px solid #dedede; }
.group:last-child { border: 0; }
.group.small { padding: 0 18px; }
.tools { display: flex; gap: 16px; }
.tools button { width: 48px; height: 48px; }
.tools .fx { color: #666; font: italic 50px/48px "Liberation Serif", serif; }
.menu { gap: 5px; height: 28px; margin-top: 4px; }

/* viewport */
.viewport { position: relative; display: flex; flex: 1; justify-content: space-between; background: #fff; }
.scene { position: absolute; inset: 0; width: 100%; height: 100%; }
.left-dock { position: relative; display: flex; flex-direction: column; justify-content: space-between; width: 450px; margin: 6px 0 4px 6px; }
.panel-head { display: flex; align-items: center; gap: 14px; height: 37px; padding: 0 16px 0 6px; border: 2px solid #ccc; background: #f1f1f1; }
.panel-head button { margin-left: auto; }
.tree { display: flex; flex-direction: column; gap: 6px; padding-top: 8px; }
.tree li { display: flex; height: 30px; }
.l0 { padding-left: 26px; }
.l1 { padding-left: 53px; }
.l2 { padding-left: 108px; }
.toggle { width: 28px; justify-content: flex-start; }
.toggle svg { width: 18px; height: 22px; }
.label { display: flex; align-items: center; background: #f1f1f1; }
.vis { margin: 0 7px 0 4px; }
.grey { color: #969696; }
.node { display: flex; align-items: center; gap: 20px; height: 30px; padding: 0 15px 0 5px; }
.current { height: 24px; margin-left: 1px; padding-right: 18px; background: #999; color: #fff; font-weight: 700; }
.radio { margin: 0 10px 0 4px; }
.parent { background: repeating-linear-gradient(120deg, #6f86ae 0 3px, transparent 3px 8px) 0 100% / 100% 6px no-repeat; }
.selected { padding-right: 18px; background: #0696d7; color: #fff; font-weight: 700; }
.comments { display: flex; align-items: center; justify-content: space-between; height: 38px; padding: 0 18px 0 37px; border-bottom: 4px solid #000; background: #f1f1f1; box-shadow: inset 1px 0 #ccc, inset -2px 0 #ccc; }

.right-dock { position: relative; width: 600px; margin: 12px 3px 0 0; }
.cube { width: 160px; height: 164px; margin: 0 6px 0 auto; }
.axis { font: 20px "Liberation Sans", sans-serif; text-anchor: middle; }
.axis.z { fill: #8585f8; }
.axis.x { fill: #ff8585; }
.face { fill: #92959b; font: 700 13px "Open Sans", sans-serif; }
.face.front { font-size: 10px; }

.feature { margin-top: 10px; border: 2px solid #ccc; background: #f1f1f1; }
.feature-head { display: flex; align-items: center; gap: 6px; height: 35px; padding: 0 5px 0 16px; border-bottom: 2px solid #ccc; }
.feature-head h2 { flex: 1; }
.feature-body { display: flex; flex-direction: column; gap: 5px; padding: 3px 0 4px; }
.row { display: grid; grid-template-columns: 161px 1fr; align-items: center; height: 40px; margin: 0 47px 0 18px; }
.combo { display: flex; align-items: center; gap: 7px; height: 40px; padding: 0 7px 0 3px; border: 2px solid #e0e0e0; border-radius: 3px; background: #fff; }
.combo select { flex: 1; border: 0; padding: 0; background: none; appearance: none; outline: 0; }
.edges { height: 168px; margin: 5px 46px 5px 12px; border: 2px solid #e0e0e0; border-top-width: 1px; background: #fff; }
.edge { display: flex; align-items: center; height: 40px; padding-left: 7px; background: #aacfff; }
.edge-name { width: 202px; }
.edge input { width: 74px; height: 36px; padding: 0 2px 5px; border: 1px solid #bbb; background: #fff; }
.tangent { margin: 0 8px 0 61px; }
.edge-tools { display: flex; align-items: center; gap: 25px; padding: 96px 0 0 14px; }
.select-btn { justify-content: flex-start; gap: 7px; width: 82px; height: 40px; padding-left: 11px; border-radius: 2px; background: #0696d7; color: #fff; }
.select-btn svg { width: 15px; height: 25px; }
.row input[type="checkbox"] { width: 20px; height: 20px; margin-left: 7px; appearance: none; border: 2px solid #666; border-radius: 4px; background: #bdbdbd; }
.row input[type="checkbox"]::before { content: ""; display: block; width: 6px; height: 12px; margin: 0 0 0 5px; border: solid #222; border-width: 0 2px 2px 0; transform: rotate(35deg); }
.row .text { width: 100%; height: 40px; padding: 0 3px 5px; border: 2px solid #ccc; background: #fff; }
.feature hr { width: 576px; height: 2px; margin: 5px 0 3px 1px; border: 0; background: #ccc; }
.feature-foot { display: flex; align-items: center; gap: 15px; height: 54px; padding: 0 16px 0 11px; border-top: 2px solid #ccc; }
.feature-foot svg { margin-right: auto; }
.feature-foot button { width: 90px; height: 28px; border: 2px solid #c4c4c4; background: #e8e8e8; color: #777; }

.value-box { position: absolute; top: calc(50% - 375px); left: calc(50% + 113px); display: flex; align-items: center; height: 33px; background: #f1f1f1; }
.grip { width: 12px; height: 33px; margin: 0 3px 0 6px; border-right: 3px solid #d8d8d8; background: repeating-linear-gradient(120deg, #ccc 0 1px, #f1f1f1 1px 4px); }
.value-box input { width: 93px; height: 30px; padding: 0 0 3px; border: 2px solid #ccc; background: linear-gradient(#0078d7, #0078d7) 16px 1px / 56px 20px no-repeat #fff; color: #fff; text-align: center; }
.value-box button { width: 36px; }
.value-box button svg { width: 6px; height: 22px; }

.navbar { position: absolute; bottom: 9px; left: 50%; display: flex; align-items: center; gap: 14px; height: 36px; padding: 0 8px 0 5px; background: #f1f1f1; transform: translateX(-50%); }
.navbar .drop { gap: 7px; margin-right: -5px; }
.navbar .tight { gap: 2px; margin-right: -3px; }

/* timeline */
.timeline { display: flex; height: 70px; padding-left: 13px; border-top: 2px solid #d8d8d8; background: #f1f1f1; }
.playback { display: flex; align-items: center; gap: 14px; padding-top: 4px; }
.features { position: relative; display: flex; height: 62px; margin-left: 23px; padding-top: 22px; }
.features::after { content: ""; position: absolute; right: 17px; bottom: 0; left: 17px; height: 3px; background: #c8c8c8; }
.features li { position: relative; display: flex; flex-direction: column; align-items: center; gap: 4px; width: 36px; }
.features li::after { content: ""; width: 3px; height: 9px; background: #c8c8c8; }
.features li svg { width: 25px; height: 25px; }
.features .off svg { opacity: .25; }
.features li .slashes { position: absolute; top: -13px; width: 24px; height: 10px; }
.features li .marker { position: absolute; top: -9px; right: -9px; z-index: 1; width: 18px; height: 49px; }
.settings { margin: 4px 15px 0 auto; color: #777; }
```
